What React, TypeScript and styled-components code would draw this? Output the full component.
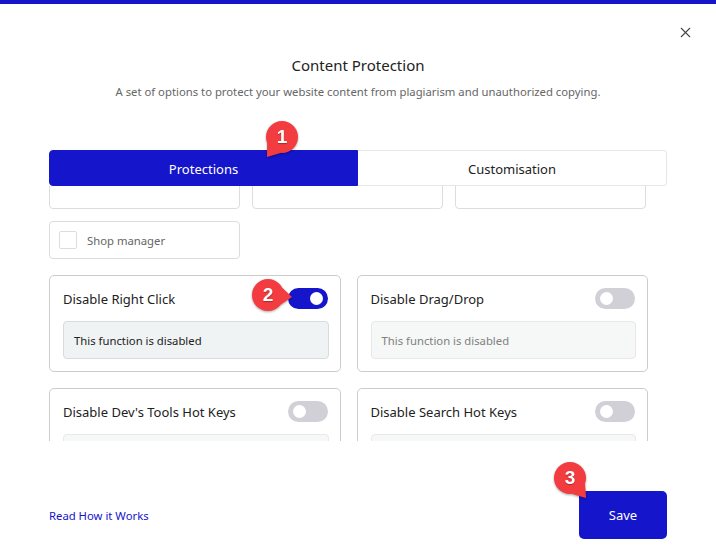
import styled, { createGlobalStyle } from 'styled-components';
import { X } from 'lucide-react';

const blue = '#1515cb';

const GlobalStyle = createGlobalStyle`
    * { box-sizing: border-box; }
    html, body { margin: 0; padding: 0; background: #fff; }
    body { font-family: "Noto Sans", "Open Sans", sans-serif; }
`;

const roles = ['', '', ''];

const features = [
    { title: 'Disable Right Click', on: true },
    { title: 'Disable Drag/Drop', on: false },
    { title: "Disable Dev's Tools Hot Keys", on: false },
    { title: 'Disable Search Hot Keys', on: false },
];

function Callout({ n, x, y, tipX, tipY }: { n: number; x: number; y: number; tipX: number; tipY: number }) {
    // tail is aimed at the tip, circle sits at the middle of the 60px box
    const angle = Math.atan2(tipY, tipX);
    const spread = 0.55;
    const p1 = `${30 + 16 * Math.cos(angle - spread)},${30 + 16 * Math.sin(angle - spread)}`;
    const p2 = `${30 + 16 * Math.cos(angle + spread)},${30 + 16 * Math.sin(angle + spread)}`;
    return (
        <Bubble $x={x} $y={y}>
            <svg width="60" height="60" viewBox="0 0 60 60">
                <circle cx="30" cy="30" r="16" fill="#f23c40" />
                <polygon points={`${p1} ${30 + tipX},${30 + tipY} ${p2}`} fill="#f23c40" />
            </svg>
            <BubbleNumber>{n}</BubbleNumber>
        </Bubble>
    );
}

export default function App() {
    return (
        <Modal>
            <GlobalStyle />
            <CloseButton><X size={17} strokeWidth={1.5} /></CloseButton>
            <Title>Content Protection</Title>
            <Subtitle>A set of options to protect your website content from plagiarism and unauthorized copying.</Subtitle>

            <Tabs>
                <Tab $active>Protections</Tab>
                <Tab>Customisation</Tab>
            </Tabs>

            <ScrollArea>
                <ScrollContent>
                    <RoleGrid>
                        {roles.map((r, i) => <RoleCard key={i}>{r}</RoleCard>)}
                        <RoleCard>
                            <Checkbox />
                            <RoleName>Shop manager</RoleName>
                        </RoleCard>
                    </RoleGrid>
                    <FeatureGrid>
                        {features.map((f) => (
                            <FeatureCard key={f.title}>
                                <FeatureHead>
                                    <FeatureTitle>{f.title}</FeatureTitle>
                                    <Toggle $on={f.on}><Knob /></Toggle>
                                </FeatureHead>
                                <StatusBox $on={f.on}>This function is disabled</StatusBox>
                            </FeatureCard>
                        ))}
                    </FeatureGrid>
                </ScrollContent>
            </ScrollArea>

            <Footer>
                <HelpLink href="#">Read How it Works</HelpLink>
                <SaveButton>Save</SaveButton>
            </Footer>

            <Callout n={1} x={282} y={137} tipX={-15} tipY={20} />
            <Callout n={2} x={268} y={295} tipX={24} tipY={2} />
            <Callout n={3} x={570} y={478} tipX={16} tipY={20} />
        </Modal>
    );
}

const Modal = styled.div`
    position: relative;
    width: 716px;
    height: 554px;
    border-top: 4px solid ${blue};
    padding: 51px 49px 0;
    background: #fff;
    overflow: hidden;
`;

const CloseButton = styled.button`
    position: absolute;
    top: 19px;
    right: 22px;
    width: 18px;
    height: 18px;
    padding: 0;
    border: 0;
    background: none;
    color: #444;
    display: flex;
    align-items: center;
    justify-content: center;
`;

const Title = styled.h2`
    margin: 0;
    font-size: 15px;
    line-height: 20px;
    font-weight: 400;
    color: #222;
    text-align: center;
`;

const Subtitle = styled.p`
    margin: 7px 0 0;
    font-size: 11.3px;
    line-height: 20px;
    color: #666;
    text-align: center;
`;

const Tabs = styled.div`
    display: grid;
    grid-template-columns: 1fr 1fr;
    height: 36px;
    margin-top: 48px;
`;

const Tab = styled.div<{ $active?: boolean }>`
    display: flex;
    align-items: center;
    justify-content: center;
    padding-top: 2px;
    font-size: 13px;
    color: ${(p) => (p.$active ? '#fff' : '#222')};
    background: ${(p) => (p.$active ? blue : '#fff')};
    border: 1px solid ${(p) => (p.$active ? blue : '#e6e6e6')};
    border-left-width: ${(p) => (p.$active ? '1px' : '0')};
    border-radius: ${(p) => (p.$active ? '4px 0 0 4px' : '0 4px 4px 0')};
`;

const ScrollArea = styled.div`
    height: 255px;
    overflow: hidden;
`;

const ScrollContent = styled.div`
    width: 599px;
    margin-top: -15px;
`;

const RoleGrid = styled.div`
    display: grid;
    grid-template-columns: repeat(3, 1fr);
    gap: 12px;
    width: 597px;
`;

const RoleCard = styled.div`
    display: flex;
    align-items: center;
    gap: 10px;
    height: 38px;
    padding: 0 9px;
    border: 1px solid #ddd;
    border-radius: 4px;
`;

const Checkbox = styled.span`
    width: 18px;
    height: 18px;
    border: 1px solid #ddd;
    border-radius: 2px;
    background: #fff;
`;

const RoleName = styled.span`
    font-size: 11.3px;
    color: #666;
`;

const FeatureGrid = styled.div`
    display: grid;
    grid-template-columns: 1fr 1fr;
    gap: 16px;
    margin-top: 16px;
`;

const FeatureCard = styled.div`
    height: 97px;
    padding: 12px 11px 12px 13px;
    border: 1px solid #ccc;
    border-radius: 5px;
`;

const FeatureHead = styled.div`
    display: flex;
    align-items: center;
    justify-content: space-between;
    height: 21px;
    margin-bottom: 12px;
    padding-right: 1px;
`;

const FeatureTitle = styled.span`
    font-size: 13px;
    color: #222;
`;

const Toggle = styled.span<{ $on: boolean }>`
    display: flex;
    align-items: center;
    justify-content: ${(p) => (p.$on ? 'flex-end' : 'flex-start')};
    width: 40px;
    height: 21px;
    padding: 0 5px;
    border-radius: 11px;
    background: ${(p) => (p.$on ? blue : '#d0d0d6')};
`;

const Knob = styled.span`
    width: 13px;
    height: 13px;
    border-radius: 50%;
    background: #fff;
`;

const StatusBox = styled.div<{ $on: boolean }>`
    display: flex;
    align-items: center;
    height: 38px;
    padding: 0 10px;
    font-size: 11.3px;
    border-radius: 4px;
    border: 1px solid ${(p) => (p.$on ? '#d8dcdc' : '#e8e8e8')};
    background: ${(p) => (p.$on ? '#f0f3f4' : '#f6f7f7')};
    color: ${(p) => (p.$on ? '#222' : '#808080')};
`;

const Footer = styled.div`
    display: flex;
    align-items: center;
    justify-content: space-between;
    margin-top: 50px;
`;

const HelpLink = styled.a`
    font-size: 11.3px;
    color: ${blue};
    text-decoration: none;
`;

const SaveButton = styled.button`
    width: 88px;
    height: 48px;
    border: 0;
    border-radius: 5px;
    background: ${blue};
    color: #fff;
    font-family: inherit;
    font-size: 13px;
`;

const Bubble = styled.div<{ $x: number; $y: number }>`
    position: absolute;
    left: ${(p) => p.$x - 30}px;
    top: ${(p) => p.$y - 34}px;
    width: 60px;
    height: 60px;
    filter: drop-shadow(0 1px 1px rgba(0, 0, 0, 0.35));
    svg { display: block; }
`;

const BubbleNumber = styled.span`
    position: absolute;
    inset: 0;
    display: flex;
    align-items: center;
    justify-content: center;
    font-family: "Liberation Sans", sans-serif;
    font-size: 19px;
    font-weight: 700;
    color: #fff;
    text-shadow: 0 1px 1px rgba(0, 0, 0, 0.3);
`;
